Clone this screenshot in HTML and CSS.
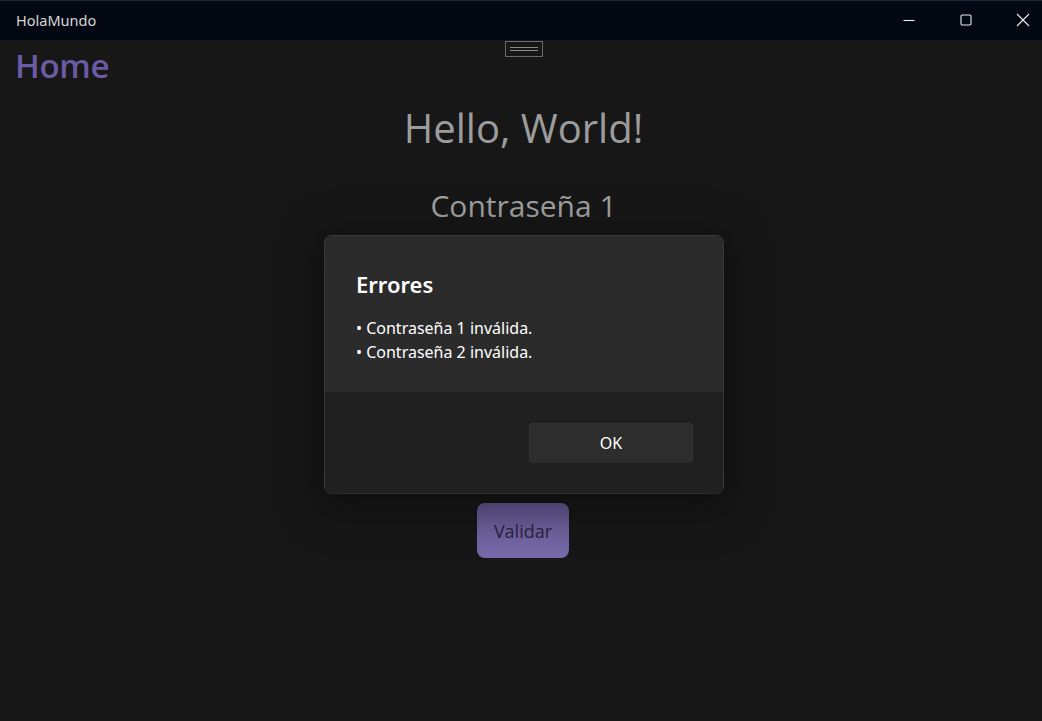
FILE: index.html
```html
<!DOCTYPE html>
<html lang="es">
<head>
<meta charset="utf-8">
<title>HolaMundo</title>
<link rel="stylesheet" href="styles.css">
</head>
<body>
<div class="window">
  <header class="titlebar">
    <span class="app-title">HolaMundo</span>
    <div class="caption-buttons">
      <span class="cap-btn"><svg width="12" height="12" viewBox="0 0 12 12"><path d="M0.5 6.5h11" stroke="#ececec" stroke-width="1.1"/></svg></span>
      <span class="cap-btn"><svg width="12" height="12" viewBox="0 0 12 12"><rect x="1" y="1" width="10" height="10" rx="1.2" fill="none" stroke="#ececec" stroke-width="1.1"/></svg></span>
      <span class="cap-btn"><svg width="14" height="14" viewBox="0 0 14 14"><path d="M1 1l12 12M13 1l-12 12" stroke="#ececec" stroke-width="1.1"/></svg></span>
    </div>
  </header>
  <main class="content">
    <div class="drag-handle"><span class="grip"></span></div>
    <div class="page">
      <h1 class="home">Home</h1>
      <div class="stack">
        <h2 class="hello">Hello, World!</h2>
        <h3 class="label">Contraseña 1</h3>
        <div class="hidden-fields"></div>
        <button class="validar">Validar</button>
      </div>
    </div>
    <div class="dialog" role="dialog">
      <div class="dialog-body">
        <div class="dialog-title">Errores</div>
        <div class="dialog-text">• Contraseña 1 inválida.<br>• Contraseña 2 inválida.</div>
      </div>
      <div class="dialog-footer">
        <button class="ok">OK</button>
      </div>
    </div>
  </main>
</div>
</body>
</html>
```
FILE: styles.css
```css
* { box-sizing: border-box; }
html, body { margin: 0; padding: 0; }
body {
  width: 1042px;
  height: 721px;
  overflow: hidden;
  background: #171717;
  font-family: "Open Sans", "Noto Sans", sans-serif;
}
.window {
  display: flex;
  flex-direction: column;
  height: 721px;
}
.titlebar {
  height: 40px;
  flex: none;
  background: #040812;
  border-top: 1px solid #1e2433;
  display: flex;
  align-items: center;
  justify-content: space-between;
}
.app-title {
  padding-left: 16px;
  font-family: "Noto Sans", "Open Sans", sans-serif;
  font-size: 14.5px;
  color: #d6d6d6;
  margin-top: -1px;
}
.caption-buttons {
  display: flex;
  height: 100%;
  gap: 19px;
}
.cap-btn {
  width: 38px;
  display: flex;
  align-items: center;
  justify-content: center;
  margin-top: -2px;
}
.content {
  position: relative;
  flex: 1;
  background: #171717;
}
.drag-handle {
  position: absolute;
  top: 1px;
  left: 505px;
  width: 38px;
  height: 16px;
  border: 1px solid #6b6b6b;
  display: flex;
  align-items: center;
  justify-content: center;
}
.grip {
  width: 28px;
  height: 4px;
  border-top: 1px solid #8a8a8a;
  border-bottom: 1px solid #8a8a8a;
}
.page {
  display: flex;
  flex-direction: column;
}
.home {
  margin: 0;
  padding: 3px 0 0 15px;
  font-size: 33px;
  font-weight: 600;
  line-height: 46px;
  color: #6a5ba4;
  letter-spacing: -0.3px;
}
.stack {
  display: flex;
  flex-direction: column;
  align-items: center;
  padding-left: 5px;
}
.hello {
  margin: 11px 0 0;
  font-size: 40px;
  font-weight: 400;
  line-height: 56px;
  color: #9c9c9c;
}
.label {
  margin: 30px 0 0;
  font-size: 30px;
  font-weight: 400;
  line-height: 40px;
  color: #a0a0a0;
}
.hidden-fields { height: 277px; }
.validar {
  width: 92px;
  height: 55px;
  border: none;
  border-radius: 8px;
  background: linear-gradient(#63568f, #786bab);
  color: #29233f;
  font-family: "Open Sans", sans-serif;
  font-size: 18px;
  padding: 0;
  margin-left: -1px;
}
.dialog {
  position: absolute;
  top: 195px;
  left: 324px;
  width: 400px;
  height: 259px;
  border-radius: 8px;
  border: 1px solid #3a3a3a;
  border-bottom-color: #2e2e2e;
  overflow: hidden;
  display: flex;
  flex-direction: column;
  box-shadow: 0 8px 40px 10px rgba(0,0,0,0.35);
  font-family: "Noto Sans", "Open Sans", sans-serif;
}
.dialog-body {
  background: #2b2b2b;
  height: 157px;
  padding: 34px 31px 0;
  border-bottom: 1px solid #1d1d1d;
}
.dialog-title {
  font-size: 22px;
  font-weight: 600;
  color: #ffffff;
  line-height: 28px;
}
.dialog-text {
  margin-top: 18px;
  font-size: 16px;
  line-height: 24px;
  color: #ffffff;
}
.dialog-footer {
  flex: 1;
  background: #202020;
  display: flex;
  justify-content: flex-end;
  align-items: flex-start;
  padding: 30px 30px 0 0;
}
.ok {
  width: 164px;
  height: 40px;
  border: 1px solid #333333;
  border-bottom-color: #2a2a2a;
  border-radius: 4px;
  background: #2d2d2d;
  color: #ffffff;
  font-family: "Noto Sans", "Open Sans", sans-serif;
  font-size: 16px;
  padding: 0;
}
```
